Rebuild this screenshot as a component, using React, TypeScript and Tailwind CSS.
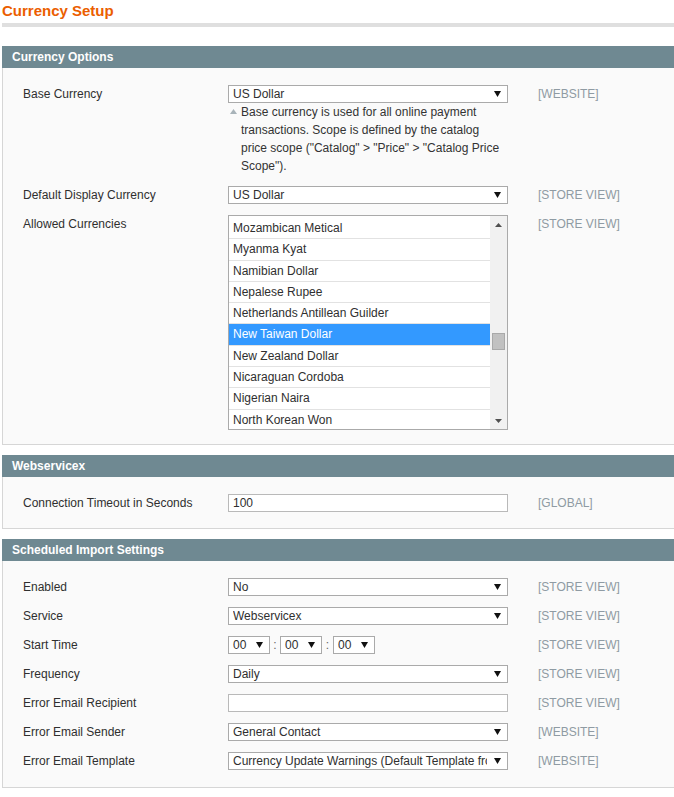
import React from "react";

const font = { fontFamily: '"Liberation Sans", Arial, sans-serif' };

function Arrow({ color = "#111" }: { color?: string }) {
  return (
    <svg width="7" height="6" viewBox="0 0 7 6" className="block">
      <polygon points="0,0 7,0 3.5,6" fill={color} />
    </svg>
  );
}

function Select({ value }: { value: string }) {
  return (
    <div className="w-[280px] h-[18px] border border-[#aaaaaa] bg-white flex items-center pl-[4px] pr-[6px]">
      <span className="flex-1 overflow-hidden whitespace-nowrap leading-[16px] text-[#2f2f2f]">
        {value}
      </span>
      <span className="ml-[7px] shrink-0">
        <Arrow />
      </span>
    </div>
  );
}

function TextInput({ value = "" }: { value?: string }) {
  return (
    <div className="w-[280px] h-[18px] border border-[#b9b9b9] bg-white pl-[4px] leading-[16px] text-[#2f2f2f]">
      {value}
    </div>
  );
}

function Row({
  label,
  scope,
  children,
}: {
  label: string;
  scope: string;
  children: React.ReactNode;
}) {
  return (
    <div className="flex items-start pt-[5px] pb-[6px]">
      <div className="w-[225px] shrink-0 pl-[20px] leading-[18px] text-[#2f2f2f]">{label}</div>
      <div className="w-[280px] shrink-0">{children}</div>
      <div className="pl-[30px] leading-[18px] text-[#8f9ba3]">{scope}</div>
    </div>
  );
}

function Panel({
  title,
  children,
  pb = "pb-[11px]",
  className = "",
}: {
  title: string;
  children: React.ReactNode;
  pb?: string;
  className?: string;
}) {
  return (
    <section className={`ml-[2px] w-[700px] ${className}`}>
      <div className="h-[22px] bg-[#6f8992] pl-[10px] leading-[22px] font-bold text-white">
        {title}
      </div>
      <div className={`border-l border-b border-[#d6d6d6] bg-[#fafafa] pt-[12px] ${pb}`}>
        {children}
      </div>
    </section>
  );
}

const currencies = [
  "Mozambican Metical",
  "Myanma Kyat",
  "Namibian Dollar",
  "Nepalese Rupee",
  "Netherlands Antillean Guilder",
  "New Taiwan Dollar",
  "New Zealand Dollar",
  "Nicaraguan Cordoba",
  "Nigerian Naira",
  "North Korean Won",
];

function MultiSelect() {
  return (
    <div className="w-[280px] h-[215px] border border-[#aaaaaa] bg-white flex overflow-hidden">
      <div className="flex-1 pt-[2px]">
        {currencies.map((c) => (
          <div
            key={c}
            className={`h-[21.3px] border-b border-[#e2e2e2] pl-[4px] leading-[20px] ${
              c === "New Taiwan Dollar" ? "bg-[#3399ff] text-white" : "text-[#2f2f2f]"
            }`}
          >
            {c}
          </div>
        ))}
      </div>
      <div className="w-[17px] shrink-0 bg-[#f1f1f1] flex flex-col items-center">
        <div className="h-[17px] flex items-center justify-center">
          <svg width="7" height="4" viewBox="0 0 7 4">
            <polygon points="0,4 7,4 3.5,0" fill="#505050" />
          </svg>
        </div>
        <div className="mt-[100px] w-[13px] h-[17px] bg-[#c1c1c1] border border-[#a9a9a9]" />
        <div className="mt-auto h-[17px] flex items-center justify-center">
          <svg width="7" height="4" viewBox="0 0 7 4">
            <polygon points="0,0 7,0 3.5,4" fill="#505050" />
          </svg>
        </div>
      </div>
    </div>
  );
}

function TimeSelect() {
  return (
    <div className="w-[42px] h-[18px] border border-[#aaaaaa] bg-white flex items-center pl-[4px] pr-[6px]">
      <span className="flex-1 leading-[16px] text-[#2f2f2f]">00</span>
      <Arrow />
    </div>
  );
}

export default function App() {
  return (
    <div className="w-[674px] h-[797px] overflow-hidden bg-white text-[12px]" style={font}>
      <div className="pl-[2px] pt-[2px] leading-[18px] text-[15px] font-bold text-[#eb5e00]">
        Currency Setup
      </div>
      <div className="ml-[2px] mt-[3px] h-[4px] bg-[#dfdfdf]" />

      <Panel title="Currency Options" className="mt-[19px]" pb="pb-[8px]">
        <Row label="Base Currency" scope="[WEBSITE]">
          <Select value="US Dollar" />
          <div className="flex text-[#333] leading-[18px]">
            <span className="w-[13px] shrink-0 pl-[2px] pt-[6px]">
              <svg width="7" height="5" viewBox="0 0 7 5">
                <polygon points="0,5 7,5 3.5,0" fill="#a8b3b9" />
              </svg>
            </span>
            <span className="w-[266px]">
              Base currency is used for all online payment transactions. Scope is defined by
              the catalog price scope ("Catalog" &gt; "Price" &gt; "Catalog Price Scope").
            </span>
          </div>
        </Row>
        <Row label="Default Display Currency" scope="[STORE VIEW]">
          <Select value="US Dollar" />
        </Row>
        <Row label="Allowed Currencies" scope="[STORE VIEW]">
          <MultiSelect />
        </Row>
      </Panel>

      <Panel title="Webservicex" className="mt-[10px]" pb="pb-[10px]">
        <Row label="Connection Timeout in Seconds" scope="[GLOBAL]">
          <TextInput value="100" />
        </Row>
      </Panel>

      <Panel title="Scheduled Import Settings" className="mt-[10px]">
        <Row label="Enabled" scope="[STORE VIEW]">
          <Select value="No" />
        </Row>
        <Row label="Service" scope="[STORE VIEW]">
          <Select value="Webservicex" />
        </Row>
        <Row label="Start Time" scope="[STORE VIEW]">
          <div className="flex items-center">
            <TimeSelect />
            <span className="w-[10px] text-center text-[#666]">:</span>
            <TimeSelect />
            <span className="w-[11px] text-center text-[#666]">:</span>
            <TimeSelect />
          </div>
        </Row>
        <Row label="Frequency" scope="[STORE VIEW]">
          <Select value="Daily" />
        </Row>
        <Row label="Error Email Recipient" scope="[STORE VIEW]">
          <TextInput />
        </Row>
        <Row label="Error Email Sender" scope="[WEBSITE]">
          <Select value="General Contact" />
        </Row>
        <Row label="Error Email Template" scope="[WEBSITE]">
          <Select value="Currency Update Warnings (Default Template from Locale)" />
        </Row>
      </Panel>
    </div>
  );
}
